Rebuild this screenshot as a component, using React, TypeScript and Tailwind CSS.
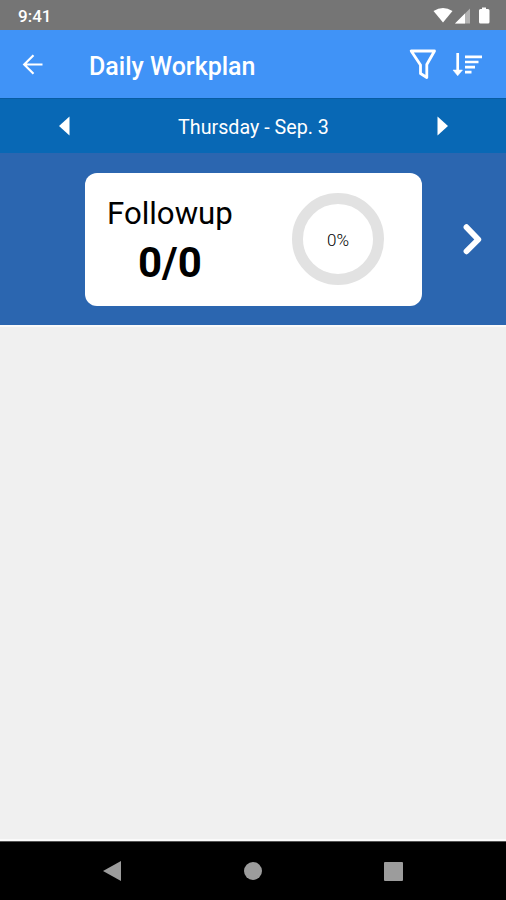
const StatusBar = () => {
    return (
        <div className="flex h-[30px] items-center bg-[#757575] pr-4 pl-[18px] text-white">
            <span className="flex-1 pt-[3px] text-[17px] leading-none font-medium">9:41</span>
            <svg className="h-[17px] w-[58px]" viewBox="432 7 58 17" fill="currentColor">
                <path d="M433.5 11 Q443 5 452.500 11 L443 22.500Z" />
                <path d="M470 8.500 V23.500 H455Z" opacity="0.45" />
                <path d="M465 13.500 V23.500 H455Z" />
                <path d="M482 7.500 H486 V9 H488 Q489.500 9 489.500 10.500 V22 Q489.500 23.500 488 23.500 H480.500 Q479 23.500 479 22 V10.500 Q479 9 480.500 9 H482Z" />
            </svg>
        </div>
    );
};

const Header = () => {
    return (
        <header className="flex h-[68px] items-center bg-[#4093f7] pr-6 pl-[22px] text-white">
            <svg className="h-[22px] w-[22px]" viewBox="0 0 22 22" fill="none" stroke="currentColor" strokeWidth="2.2">
                <path d="M20.500 11.500 H2.500 M11.500 2.200 L2.200 11.500 L11.500 20.800" />
            </svg>
            <h1 className="ml-[45px] flex-1 pt-1 text-[25px] leading-none font-medium whitespace-nowrap">Daily Workplan</h1>
            <svg
                className="h-8 w-7"
                viewBox="0 0 28 32"
                fill="none"
                stroke="currentColor"
                strokeWidth="2.8"
                strokeLinejoin="round"
            >
                <path d="M2.200 3 H25.500 L17.800 16.500 V29.500 L11.500 25.500 V17Z" />
            </svg>
            <svg className="ml-[15px] h-8 w-[30px]" viewBox="0 0 30 32" fill="none" stroke="currentColor" strokeWidth="2.7">
                <path d="M5.700 5 V25" />
                <path d="M1 22 H10.500 L5.700 27.800Z" fill="currentColor" stroke="currentColor" strokeWidth="0.5" />
                <path d="M13 8.800 H30.300 M13 14 H26.500 M13 19.200 H23 M13 24.200 H19.500" />
            </svg>
        </header>
    );
};

const DateBar = () => {
    return (
        <div className="flex h-[55px] items-center justify-between border-t border-[#075ca3] bg-[#0868b5] pr-[58px] pl-[59px] text-white">
            <svg className="h-5 w-[11px]" viewBox="0 0 11 20" fill="currentColor">
                <path d="M10.500 0.500 V19.500 L0 10Z" />
            </svg>
            <span className="pt-[3px] text-[19.7px] leading-none whitespace-nowrap">Thursday - Sep. 3</span>
            <svg className="h-5 w-[11px]" viewBox="0 0 11 20" fill="currentColor">
                <path d="M0.500 0.500 V19.500 L11 10Z" />
            </svg>
        </div>
    );
};

const SummaryCard = () => {
    return (
        <section className="flex h-[172px] items-center bg-[#2b66b0] pr-[22px] pl-[85px]">
            <div className="flex h-[133px] w-[337px] items-center rounded-[12px] bg-white pr-[38px] pl-[22px] text-black">
                <div className="flex flex-1 flex-col pt-[9px]">
                    <span className="text-[31.2px] leading-[38px]">Followup</span>
                    <span className="pl-[31px] text-[42px] leading-[60px] font-bold">0/0</span>
                </div>
                <div className="flex h-[92px] w-[92px] items-center justify-center rounded-full border-[11px] border-[#e2e2e2] pt-[3px] text-[17px] font-light">
                    0%
                </div>
            </div>
            <svg
                className="ml-auto h-8 w-6"
                viewBox="0 0 24 32"
                fill="none"
                stroke="white"
                strokeWidth="5.8"
                strokeLinecap="round"
                strokeLinejoin="round"
            >
                <path d="M6.500 4.200 L18.300 16.500 L6.500 28.300" />
            </svg>
        </section>
    );
};

const NavigationBar = () => {
    return (
        <nav className="flex h-[59px] items-center justify-between border-t border-[#555] bg-black px-[103px] text-[#9c9c9c]">
            <svg className="h-5 w-[18px]" viewBox="0 0 18 20" fill="currentColor">
                <path d="M18 0 V20 L0 10Z" />
            </svg>
            <span className="h-[18px] w-[18px] rounded-full bg-[#9c9c9c]" />
            <span className="h-[19px] w-[19px] rounded-[1px] bg-[#9c9c9c]" />
        </nav>
    );
};

export default function App() {
    return (
        <div className="flex h-[900px] w-[506px] flex-col overflow-hidden bg-[#f0f0f0] font-['Roboto',sans-serif]">
            <StatusBar />
            <Header />
            <DateBar />
            <SummaryCard />
            <main className="flex-1 border-y-2 border-[#fafafa]" />
            <NavigationBar />
        </div>
    );
}
